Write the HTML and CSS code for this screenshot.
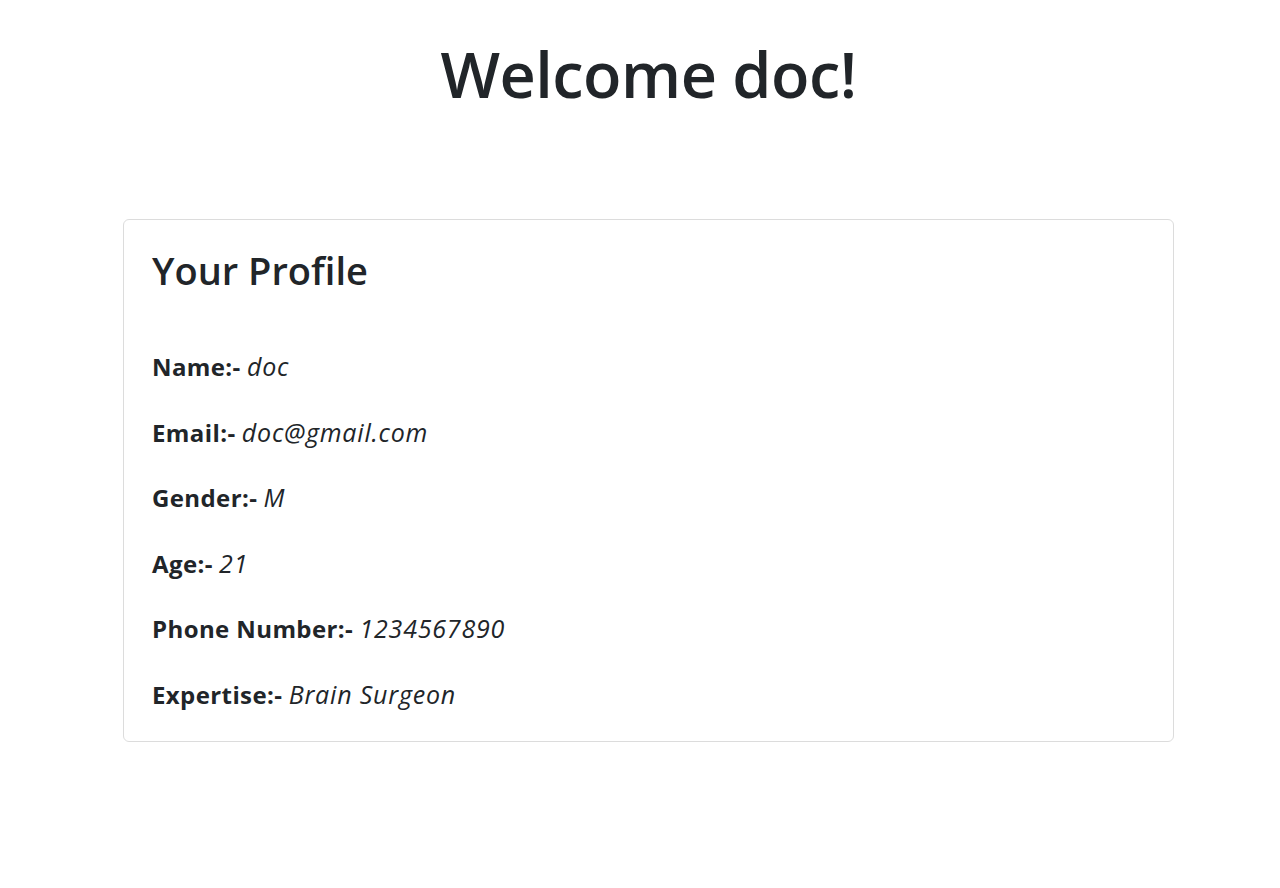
FILE: index.html
```html
<!DOCTYPE html>
<html lang="en">
<head>
<meta charset="utf-8">
<title>Welcome doc!</title>
<link rel="stylesheet" href="styles.css">
</head>
<body>
<div class="page">
  <h1 class="welcome">Welcome doc!</h1>
  <div class="card">
    <h2 class="card-title">Your Profile</h2>
    <p class="row"><b>Name:-</b> <i>doc</i></p>
    <p class="row"><b>Email:-</b> <i>doc@gmail.com</i></p>
    <p class="row"><b>Gender:-</b> <i>M</i></p>
    <p class="row"><b>Age:-</b> <i>21</i></p>
    <p class="row"><b>Phone Number:-</b> <i>1234567890</i></p>
    <p class="row"><b>Expertise:-</b> <i>Brain Surgeon</i></p>
  </div>
</div>
</body>
</html>
```
FILE: styles.css
```css
html, body {
  margin: 0;
  padding: 0;
  background: #ffffff;
}
body {
  font-family: "Open Sans", "Noto Sans", sans-serif;
  color: #212529;
}
.page {
  width: 1051px;
  margin-left: 123px;
  padding-top: 36px;
}
.welcome {
  margin: 0;
  font-size: 63px;
  font-weight: 600;
  line-height: 1.2;
  text-align: center;
  letter-spacing: -0.5px;
}
.card {
  margin-top: 107px;
  border: 1px solid #dcdcdc;
  border-radius: 6px;
  padding: 28px;
}
.card-title {
  margin: 0 0 56px 0;
  font-size: 38px;
  font-weight: 600;
  line-height: 1.2;
}
.row {
  margin: 0 0 29.5px 0;
  font-size: 24px;
  line-height: 36px;
}
.row:last-child {
  margin-bottom: 0;
}
.row b {
  font-weight: 700;
  letter-spacing: 0.4px;
}
.row i {
  font-style: italic;
  font-size: 25px;
  line-height: 1;
  letter-spacing: 0.8px;
}
```
